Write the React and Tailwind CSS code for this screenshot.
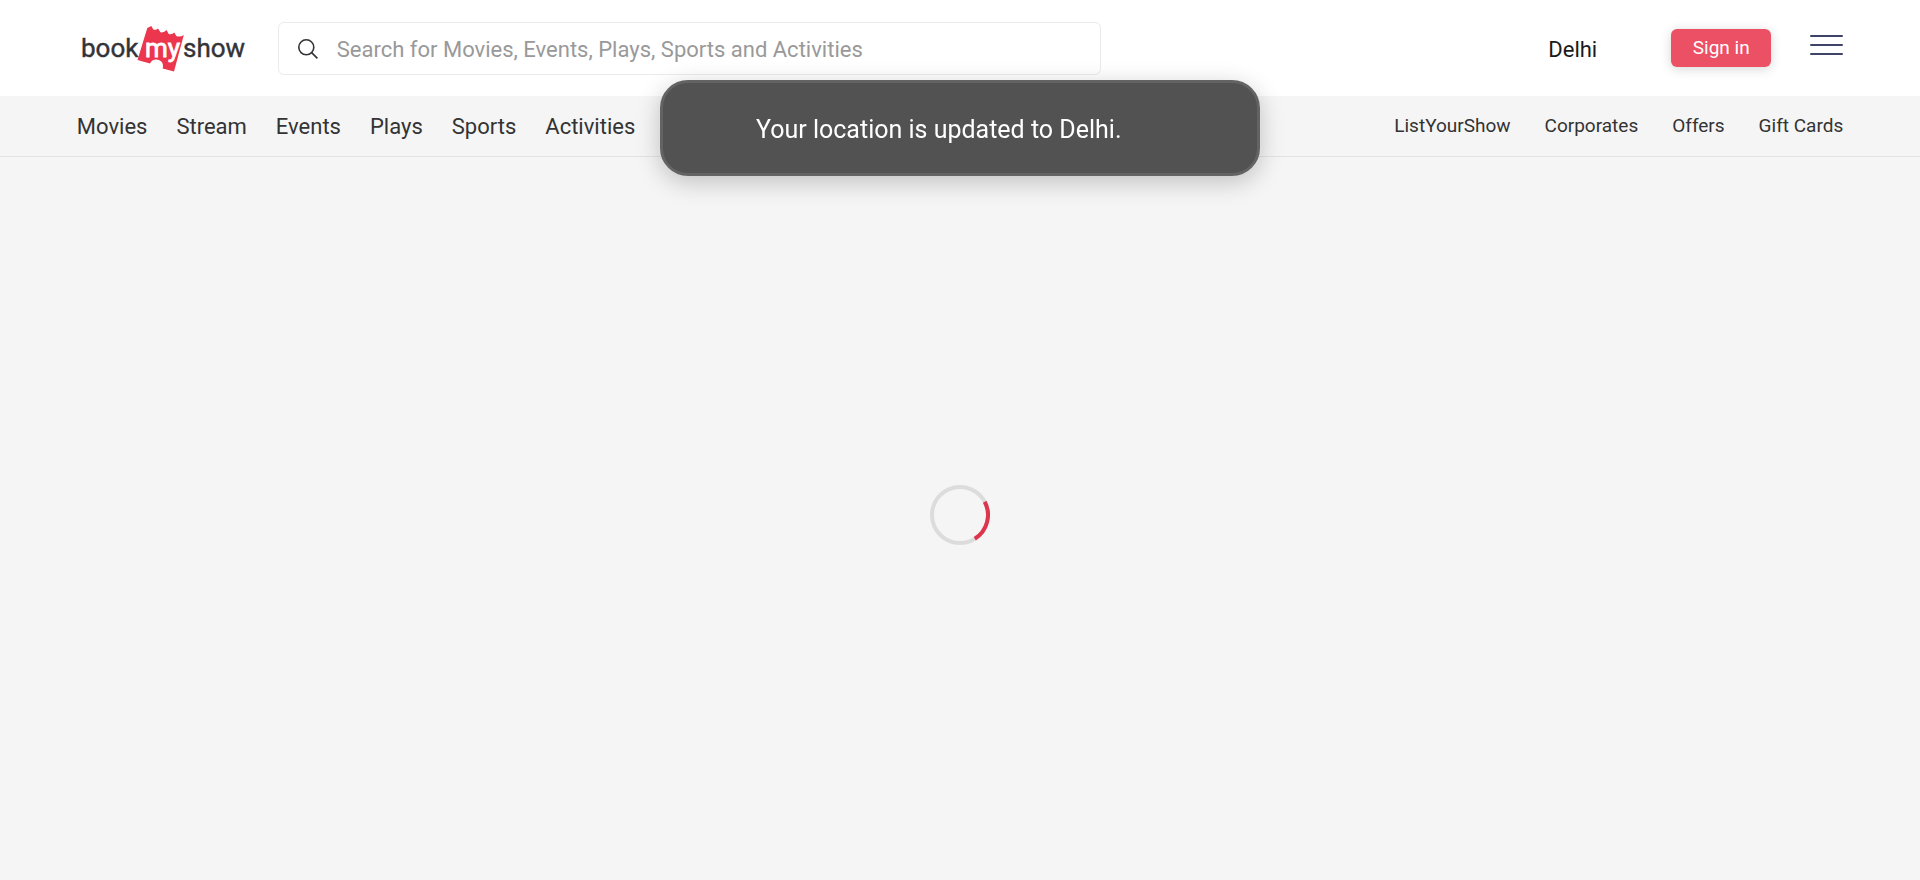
import React from "react";

const primaryLinks = ["Movies", "Stream", "Events", "Plays", "Sports", "Activities"];
const secondaryLinks = ["ListYourShow", "Corporates", "Offers", "Gift Cards"];

function Logo() {
  return (
    <a href="#home" aria-label="bookmyshow home" className="block shrink-0">
      <svg width="169" height="50" viewBox="0 0 169 50" className="font-['Roboto',sans-serif]">
        <text x="4" y="34" fontSize="26" fill="#333338" stroke="#333338" strokeWidth="0.4">book</text>
        <path
          fill="#eb364e"
          d="M70.300 5 L74.300 3 L76.300 6.500 Q79 7.500 81 5.500 L83.500 9.300 Q87 10 89.500 7 L91.700 11 Q95 12 97.300 9.500 L99.300 13 Q103 14.500 106.800 12 L97 48.500 L85.700 45.500 C87 40.500 84.500 37.300 80.500 36.700 C77 36 74.500 37.800 73 40.500 L60.500 37 Z"
        />
        <text x="68" y="34" fontSize="26" fill="#ffffff" stroke="#ffffff" strokeWidth="0.8">my</text>
        <text x="106" y="34" fontSize="26" fill="#333338" stroke="#333338" strokeWidth="0.4">show</text>
      </svg>
    </a>
  );
}

function Header() {
  return (
    <header className="flex h-24 items-center bg-white px-[4%]">
      <Logo />
      <form
        role="search"
        className="ml-8 flex h-[53px] max-w-[823px] flex-1 items-center rounded-md border border-[#ebebeb] pl-[19px]"
      >
        <label htmlFor="search" aria-label="Search" className="shrink-0 pt-0.5">
          <svg width="20" height="20" viewBox="0 0 20 20" fill="none" stroke="#333338" strokeWidth="1.6">
            <circle cx="8.300" cy="8.300" r="7.500" />
            <path d="M13.600 13.600L19.400 19.400" />
          </svg>
        </label>
        <input
          id="search"
          type="text"
          placeholder="Search for Movies, Events, Plays, Sports and Activities"
          className="ml-[19px] min-w-0 flex-1 bg-transparent pt-0.5 text-[22px] text-[#333338] outline-none placeholder:text-[#999999]"
        />
      </form>
      <div className="ml-auto flex items-center">
        <button type="button" className="pt-0.5 text-[22px] text-[#1a1a1a]">Delhi</button>
        <button
          type="button"
          className="ml-[74px] h-[38px] w-[100px] rounded-md bg-[#ec5065] text-[19px] text-white shadow-[0_2px_12px_rgba(0,0,0,0.16)]"
        >
          Sign in
        </button>
        <button type="button" aria-label="Open menu" className="ml-[39px] pb-1.5">
          <svg width="33" height="22" viewBox="0 0 33 22" stroke="#3f4368" strokeWidth="2" strokeLinecap="round">
            <path d="M1 2h31M1 11h31M1 20h31" />
          </svg>
        </button>
      </div>
    </header>
  );
}

function NavBar() {
  return (
    <nav className="flex h-[61px] items-center justify-between border-b border-[#e3e3e3] px-[4%] text-[#333333]">
      <ul className="flex gap-[29px] text-[22px]">
        {primaryLinks.map((name) => (
          <li key={name}>
            <a href={"#" + name.toLowerCase()}>{name}</a>
          </li>
        ))}
      </ul>
      <ul className="flex gap-[34px] text-[19px]">
        {secondaryLinks.map((name) => (
          <li key={name}>
            <a href={"#" + name.toLowerCase().replace(" ", "-")}>{name}</a>
          </li>
        ))}
      </ul>
    </nav>
  );
}

function Spinner() {
  return (
    <svg role="status" aria-label="Loading" width="60" height="60" viewBox="0 0 60 60" fill="none" strokeWidth="4">
      <circle cx="30" cy="30" r="28" stroke="#dcdcdc" />
      <path d="M54.700 16.800A28 28 0 0 1 44.800 53.700" stroke="#dd354c" />
    </svg>
  );
}

export default function App() {
  return (
    <div className="flex min-h-screen flex-col bg-[#f5f5f5] font-['Roboto',sans-serif]">
      <Header />
      <NavBar />
      <main className="flex flex-1 items-center justify-center pb-2">
        <Spinner />
      </main>
      <div
        role="alert"
        className="fixed top-20 left-1/2 flex h-24 w-[600px] -translate-x-1/2 items-center rounded-[28px] border-3 border-[#636363] bg-[#525252] pt-1 pl-[93px] text-[25px] text-white shadow-[0_6px_24px_rgba(0,0,0,0.22)]"
      >
        Your location is updated to Delhi.
      </div>
    </div>
  );
}
